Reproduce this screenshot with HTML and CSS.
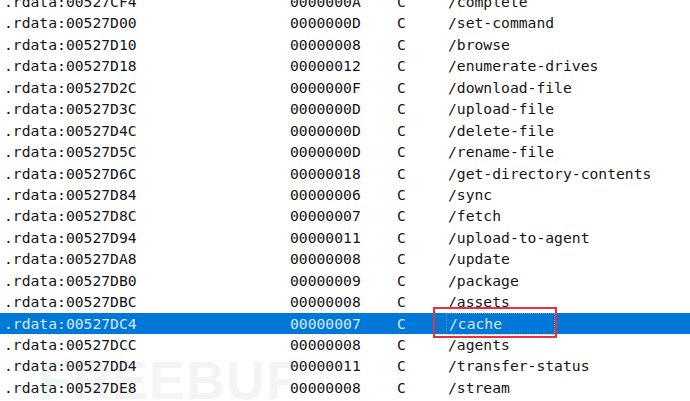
FILE: index.html
```html
<!DOCTYPE html>
<html lang="en">
<head>
    <meta charset="UTF-8">
    <title>Strings window</title>
    <link rel="stylesheet" href="styles.css">
</head>
<body>

    <div class="strings">
        <div class="row"><span>.rdata:00527CF4</span><span>0000000A</span><span>C</span><span>/complete</span></div>
        <div class="row"><span>.rdata:00527D00</span><span>0000000D</span><span>C</span><span>/set-command</span></div>
        <div class="row"><span>.rdata:00527D10</span><span>00000008</span><span>C</span><span>/browse</span></div>
        <div class="row"><span>.rdata:00527D18</span><span>00000012</span><span>C</span><span>/enumerate-drives</span></div>
        <div class="row"><span>.rdata:00527D2C</span><span>0000000F</span><span>C</span><span>/download-file</span></div>
        <div class="row"><span>.rdata:00527D3C</span><span>0000000D</span><span>C</span><span>/upload-file</span></div>
        <div class="row"><span>.rdata:00527D4C</span><span>0000000D</span><span>C</span><span>/delete-file</span></div>
        <div class="row"><span>.rdata:00527D5C</span><span>0000000D</span><span>C</span><span>/rename-file</span></div>
        <div class="row"><span>.rdata:00527D6C</span><span>00000018</span><span>C</span><span>/get-directory-contents</span></div>
        <div class="row"><span>.rdata:00527D84</span><span>00000006</span><span>C</span><span>/sync</span></div>
        <div class="row"><span>.rdata:00527D8C</span><span>00000007</span><span>C</span><span>/fetch</span></div>
        <div class="row"><span>.rdata:00527D94</span><span>00000011</span><span>C</span><span>/upload-to-agent</span></div>
        <div class="row"><span>.rdata:00527DA8</span><span>00000008</span><span>C</span><span>/update</span></div>
        <div class="row"><span>.rdata:00527DB0</span><span>00000009</span><span>C</span><span>/package</span></div>
        <div class="row"><span>.rdata:00527DBC</span><span>00000008</span><span>C</span><span>/assets</span></div>
        <div class="row selected"><span>.rdata:00527DC4</span><span>00000007</span><span>C</span><span class="focus">/cache<i class="mark"></i></span></div>
        <div class="row"><span>.rdata:00527DCC</span><span>00000008</span><span>C</span><span>/agents</span></div>
        <div class="row"><span>.rdata:00527DD4</span><span>00000011</span><span>C</span><span>/transfer-status</span></div>
        <div class="row"><span>.rdata:00527DE8</span><span>00000008</span><span>C</span><span>/stream</span></div>
    </div>

    <div class="watermark"><b>F</b>REEBUF</div>

</body>
</html>
```

FILE: styles.css
```css
body {
    margin: 0;
    padding: 0;
    background-color: #fff;
    font-family: "DejaVu Sans Mono", monospace;
    font-size: 14.7px;
    color: #151515;
    overflow: hidden;
    position: relative;
    height: 401px;
}

.strings {
    margin-top: -9px;
}

.row {
    display: grid;
    grid-template-columns: 286px 107px 51px 1fr;
    padding-left: 4px;
    height: 21.45px;
    line-height: 21.45px;
    white-space: nowrap;
}

.row.selected {
    background-color: #0078d7;
    color: #d6e9fa;
}

.focus {
    position: relative;
    padding-left: 1px;
}

.focus::before {
    content: "";
    position: absolute;
    left: -2px;
    top: 0;
    width: 107px;
    height: 20px;
    border: 1px dotted #c9a46a;
    opacity: 0.6;
}

.mark {
    position: absolute;
    left: -15px;
    top: -6px;
    width: 120px;
    height: 27px;
    border: 2px solid #e8313f;
}

.watermark {
    position: absolute;
    left: 38px;
    top: 349px;
    font-family: "Liberation Sans", Arial, sans-serif;
    font-weight: bold;
    font-size: 54px;
    letter-spacing: 1px;
    color: rgba(120, 120, 120, 0.08);
}

.watermark b {
    color: rgba(60, 160, 110, 0.09);
}
```
